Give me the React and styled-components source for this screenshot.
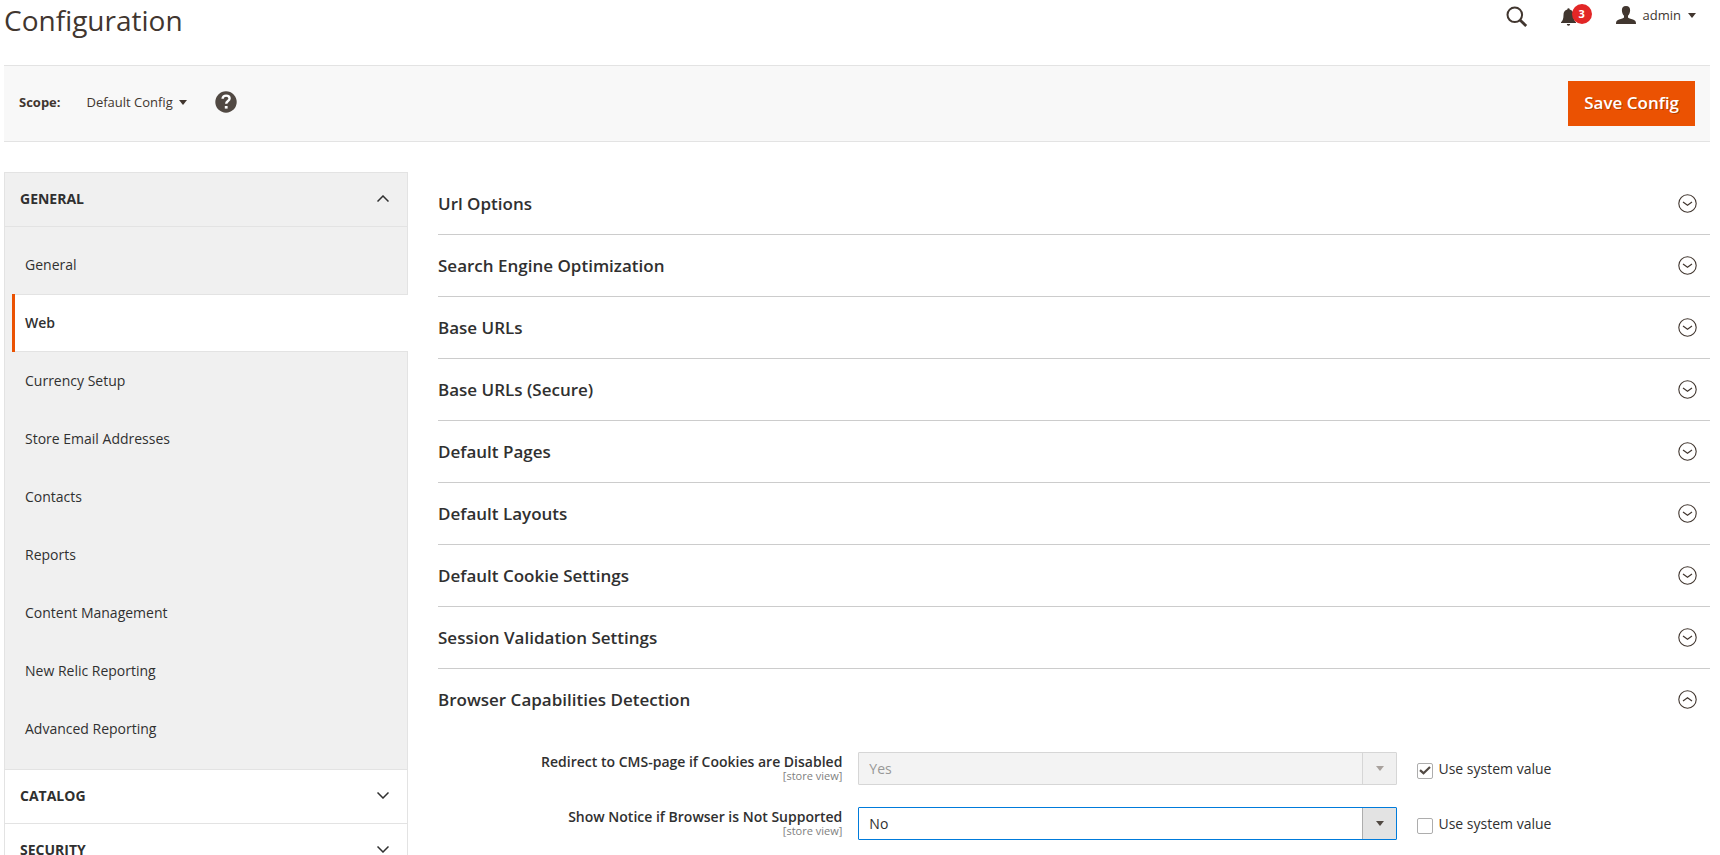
import React, { useState } from "react";
import styled, { createGlobalStyle } from "styled-components";

const GlobalStyle = createGlobalStyle`
  *, *::before, *::after { box-sizing: border-box; }
  body {
    margin: 0;
    background: #fff;
    color: #303030;
    font-family: "Open Sans", "Noto Sans", sans-serif;
    font-size: 14px;
    line-height: 20px;
  }
  button, select, input { font: inherit; color: inherit; }
  button { border: 0; padding: 0; background: none; cursor: pointer; }
  h1, h2, ul { margin: 0; padding: 0; }
  ul { list-style: none; }
  a { color: inherit; text-decoration: none; }
  svg { display: block; flex: none; }
`;

const Page = styled.div`
  padding: 0 10px 0 4px;
`;

const Header = styled.header`
  display: flex;
  justify-content: space-between;
  height: 65px;
`;

const Title = styled.h1`
  color: #41362f;
  font-size: 28px;
  font-weight: 400;
  line-height: 40px;
`;

const HeaderTools = styled.div`
  display: flex;
  align-items: center;
  height: 32px;
  padding-right: 14px;
  color: #41362f;
`;

const SearchButton = styled.button`
  padding-top: 2px;
`;

const BellButton = styled.button`
  position: relative;
  margin: 0 24px 0 33px;
  padding: 2px 16px 0 0;
`;

const Badge = styled.span`
  position: absolute;
  top: -2px;
  right: 0;
  width: 20px;
  height: 20px;
  border-radius: 50%;
  background: #e22626;
  color: #fff;
  font-size: 11px;
  font-weight: 700;
  line-height: 20px;
  text-align: center;
`;

const AccountButton = styled.button`
  display: flex;
  align-items: center;
  gap: 7px;
  padding-bottom: 2px;
  font-size: 13px;
`;

const ScopeBar = styled.section`
  display: flex;
  align-items: center;
  justify-content: space-between;
  height: 77px;
  padding: 0 15px;
  border-top: 1px solid #e3e3e3;
  border-bottom: 1px solid #e3e3e3;
  background: #f8f8f8;
  font-size: 13px;
`;

const ScopeGroup = styled.div`
  display: flex;
  align-items: center;
  padding-bottom: 3px;
  color: #41362f;
`;

const ScopeLabel = styled.span`
  font-weight: 700;
`;

const ScopeButton = styled.button`
  display: flex;
  align-items: center;
  gap: 6px;
  margin: 0 28px 0 26px;
`;

const SaveButton = styled.button`
  height: 45px;
  padding: 0 16px 2px;
  background: #eb5202;
  color: #fff;
  font-size: 17px;
  font-weight: 600;
  text-shadow: 1px 1px 0 rgba(0, 0, 0, 0.25);
`;

const Columns = styled.div`
  display: grid;
  grid-template-columns: minmax(0, 101fr) minmax(0, 318fr);
  gap: 30px;
  padding-top: 30px;
`;

const Sidebar = styled.nav`
  align-self: start;
  border: 1px solid #e3e3e3;
`;

const GroupHead = styled.button`
  display: flex;
  align-items: center;
  justify-content: space-between;
  width: 100%;
  height: 54px;
  padding: 0 18px 2px 15px;
  border-bottom: 1px solid #e3e3e3;
  background: ${(p) => (p.$open ? "#f0f0f0" : "#fff")};
  font-weight: 700;
  text-transform: uppercase;
`;

const GroupList = styled.ul`
  padding: 9px 0 11px;
  border-bottom: 1px solid #e3e3e3;
  background: #f0f0f0;
`;

const NavLink = styled.a`
  display: flex;
  align-items: center;
  height: 58px;
  margin: 0 -1px 0 7px;
  padding-left: 10px;
  border-left: 3px solid transparent;
  ${(p) =>
    p.$active &&
    `
    border-left-color: #eb5202;
    background: #fff;
    box-shadow: inset 0 1px #e3e3e3, inset 0 -1px #e3e3e3;
    font-weight: 600;
  `}
`;

const Main = styled.main`
  padding-top: 1px;
`;

const Section = styled.section`
  border-bottom: 1px solid #ccc;
`;

const SectionHead = styled.button`
  display: flex;
  align-items: center;
  justify-content: space-between;
  width: 100%;
  height: 61px;
  padding: 0 13px 0 0;
  text-align: left;
`;

const SectionTitle = styled.h2`
  font-size: 17px;
  font-weight: 600;
  line-height: 24px;
`;

const Fields = styled.div`
  padding: 22px 0 28px;
`;

const Field = styled.div`
  display: grid;
  grid-template-columns: 15fr 20fr 11fr;
  column-gap: 16px;
  align-items: start;
  min-height: 33px;
  margin-bottom: 22px;
`;

const FieldLabel = styled.label`
  font-weight: 600;
  text-align: right;
`;

const FieldScope = styled.span`
  display: block;
  color: #808080;
  font-size: 11px;
  font-weight: 400;
  line-height: 8px;
`;

const SelectBox = styled.div`
  position: relative;
`;

const Select = styled.select`
  display: block;
  width: 100%;
  height: 33px;
  padding: 0 44px 0 10px;
  border: 1px solid #007bdb;
  border-radius: 1px;
  outline: 0;
  background: #fff;
  appearance: none;
  &:disabled {
    border-color: #d6d6d6;
    background: #f3f3f3;
    color: #989898;
    opacity: 1;
  }
`;

const SelectArrow = styled.span`
  position: absolute;
  top: 1px;
  right: 1px;
  bottom: 1px;
  display: flex;
  align-items: center;
  justify-content: center;
  width: 34px;
  border-left: 1px solid ${(p) => (p.$disabled ? "#d6d6d6" : "#adadad")};
  background: ${(p) => (p.$disabled ? "#f0f0f0" : "#e3e3e3")};
  color: ${(p) => (p.$disabled ? "#a8a19d" : "#514943")};
  pointer-events: none;
`;

const CheckLabel = styled.label`
  display: flex;
  align-items: center;
  gap: 5px;
  height: 33px;
  padding-left: 4px;
`;

const CheckBox = styled.span`
  display: grid;
  margin-top: 4px;
  & > * { grid-area: 1 / 1; place-self: center; }
  svg { pointer-events: none; }
`;

const CheckInput = styled.input`
  width: 16px;
  height: 16px;
  margin: 0;
  border: 1px solid #adadad;
  border-radius: 2px;
  background: #fff;
  appearance: none;
`;

const Caret = () => (
  <svg width="8" height="5" viewBox="0 0 8 5" aria-hidden="true">
    <path d="M0 0h8L4 5z" fill="currentColor" />
  </svg>
);

const Chevron = ({ up }) => (
  <svg width="12" height="7" viewBox="0 0 12 7" fill="none" stroke="#303030" strokeWidth="1.5" aria-hidden="true">
    <path d={up ? "M.5 6.5L6 1l5.5 5.5" : "M.5 .5L6 6l5.5-5.5"} />
  </svg>
);

const CircleChevron = ({ up }) => (
  <svg width="19" height="19" viewBox="0 0 19 19" fill="none" stroke="#41362f" aria-hidden="true">
    <circle cx="9.5" cy="9.5" r="8.7" strokeWidth="1.1" />
    <path d={up ? "M5 11l4.5-3.2L14 11" : "M5 8l4.5 3.2L14 8"} strokeWidth="1.2" />
  </svg>
);

const SearchIcon = () => (
  <svg width="22" height="22" viewBox="0 0 22 22" fill="none" stroke="currentColor" aria-hidden="true">
    <circle cx="8.8" cy="8.8" r="7.3" strokeWidth="2" />
    <path d="M14 14l6.2 6" strokeWidth="2.8" />
  </svg>
);

const BellIcon = () => (
  <svg width="15" height="18" viewBox="0 0 15 18" fill="currentColor" aria-hidden="true">
    <path d="M6.3 1.5a1.2 1.2 0 0 1 2.4 0C11.4 2.2 12.5 4 12.5 7c0 4 .8 5.8 2.5 7.3V15H0v-.7C1.7 12.8 2.5 11 2.5 7c0-3 1.1-4.8 3.8-5.500zM5.8 16h3.400a1.700 1.700 0 0 1-3.400 0z" />
  </svg>
);

const UserIcon = () => (
  <svg width="20" height="18" viewBox="0 0 20 18" fill="currentColor" aria-hidden="true">
    <path d="M10 0c3 0 4.3 1.9 4.1 4.6-.1 2.2-.9 4-2.1 5.2v1.7c.4.9 2.5 1.3 5 2.1 2.3.7 3 1.9 3 4.4H0c0-2.5.7-3.7 3-4.4 2.5-.8 4.6-1.2 5-2.1V9.8C6.8 8.6 6 6.8 5.9 4.6 5.7 1.900 7 0 10 0z" />
  </svg>
);

const HelpIcon = () => (
  <svg width="22" height="22" viewBox="0 0 22 22" aria-hidden="true">
    <circle cx="11" cy="11" r="10.7" fill="#514943" />
    <path d="M7.6 7.7c0-2 1.5-3.100 3.500-3.100s3.500 1.100 3.500 2.900c0 2.600-3.400 2.500-3.400 5.300" fill="none" stroke="#fff" strokeWidth="2.400" />
    <rect x="9.8" y="15" width="2.8" height="2.6" fill="#fff" />
  </svg>
);

const CheckMark = () => (
  <svg width="12" height="9" viewBox="0 0 12 9" fill="none" stroke="#514943" strokeWidth="2.2" aria-hidden="true">
    <path d="M1 4.2l3.5 3L11 1" />
  </svg>
);

const generalItems = [
  "General", "Web", "Currency Setup", "Store Email Addresses", "Contacts",
  "Reports", "Content Management", "New Relic Reporting", "Advanced Reporting",
];

const closedSections = [
  "Url Options", "Search Engine Optimization", "Base URLs", "Base URLs (Secure)",
  "Default Pages", "Default Layouts", "Default Cookie Settings", "Session Validation Settings",
];

function ConfigField({ id, label, initial, inherited }) {
  const [useSystem, setUseSystem] = useState(inherited);
  const [value, setValue] = useState(initial);
  return (
    <Field>
      <FieldLabel htmlFor={id}>
        {label}
        <FieldScope>[store view]</FieldScope>
      </FieldLabel>
      <SelectBox>
        <Select id={id} value={value} disabled={useSystem} onChange={(e) => setValue(e.target.value)}>
          <option>Yes</option>
          <option>No</option>
        </Select>
        <SelectArrow $disabled={useSystem}><Caret /></SelectArrow>
      </SelectBox>
      <CheckLabel>
        <CheckBox>
          <CheckInput type="checkbox" checked={useSystem} onChange={(e) => setUseSystem(e.target.checked)} />
          {useSystem && <CheckMark />}
        </CheckBox>
        Use system value
      </CheckLabel>
    </Field>
  );
}

export default function App() {
  return (
    <Page>
      <GlobalStyle />
      <Header>
        <Title>Configuration</Title>
        <HeaderTools>
          <SearchButton aria-label="Search"><SearchIcon /></SearchButton>
          <BellButton aria-label="Notifications"><BellIcon /><Badge>3</Badge></BellButton>
          <AccountButton><UserIcon />admin<Caret /></AccountButton>
        </HeaderTools>
      </Header>
      <ScopeBar>
        <ScopeGroup>
          <ScopeLabel>Scope:</ScopeLabel>
          <ScopeButton>Default Config<Caret /></ScopeButton>
          <a href="#help" aria-label="What is this?"><HelpIcon /></a>
        </ScopeGroup>
        <SaveButton>Save Config</SaveButton>
      </ScopeBar>
      <Columns>
        <Sidebar>
          <GroupHead $open aria-expanded="true">General<Chevron up /></GroupHead>
          <GroupList>
            {generalItems.map((item) => (
              <li key={item}><NavLink href="#section" $active={item === "Web"}>{item}</NavLink></li>
            ))}
          </GroupList>
          <GroupHead aria-expanded="false">Catalog<Chevron /></GroupHead>
          <GroupHead aria-expanded="false">Security<Chevron /></GroupHead>
        </Sidebar>
        <Main>
          {closedSections.map((title) => (
            <Section key={title}>
              <SectionHead aria-expanded="false"><SectionTitle>{title}</SectionTitle><CircleChevron /></SectionHead>
            </Section>
          ))}
          <Section>
            <SectionHead aria-expanded="true"><SectionTitle>Browser Capabilities Detection</SectionTitle><CircleChevron up /></SectionHead>
            <Fields>
              <ConfigField id="redirect" label="Redirect to CMS-page if Cookies are Disabled" initial="Yes" inherited />
              <ConfigField id="notice" label="Show Notice if Browser is Not Supported" initial="No" inherited={false} />
            </Fields>
          </Section>
        </Main>
      </Columns>
    </Page>
  );
}
